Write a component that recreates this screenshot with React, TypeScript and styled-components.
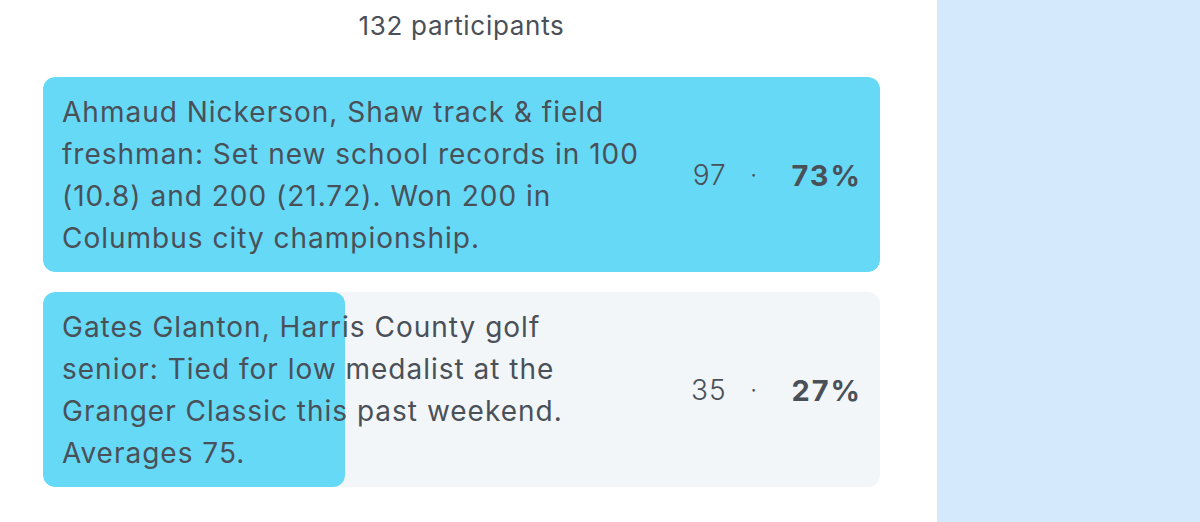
import React from "react";
import styled, { createGlobalStyle } from "styled-components";

const GlobalStyle = createGlobalStyle`
  html, body {
    margin: 0;
    padding: 0;
    background: #ffffff;
  }

  body {
    font-family: Inter, "Open Sans", sans-serif;
    color: #4a5058;
  }
`;

const Layout = styled.div`
  display: grid;
  grid-template-columns: 937px 1fr;
  height: 522px;
  overflow: hidden;
`;

const PollColumn = styled.main`
  padding: 0 57px 0 43px;
`;

const Sidebar = styled.aside`
  background: #d5e9fd;
`;

const Participants = styled.div`
  height: 50px;
  display: flex;
  align-items: center;
  justify-content: center;
  font-size: 26px;
  letter-spacing: 0.7px;
  color: #4a5058;
`;

const Options = styled.div`
  display: flex;
  flex-direction: column;
  gap: 20px;
  margin-top: 27px;
`;

const OptionRow = styled.div`
  position: relative;
  background: #f2f6f8;
  border-radius: 12px;
  overflow: hidden;
`;

const Fill = styled.div`
  position: absolute;
  top: 0;
  left: 0;
  bottom: 0;
  background: #66d9f6;
  border-radius: 12px;
`;

const OptionBody = styled.div`
  position: relative;
  display: flex;
  align-items: center;
  justify-content: space-between;
  padding: 14px 18px 13px 19px;
  min-height: 168px;
`;

const Label = styled.div`
  width: 580px;
  font-size: 28px;
  line-height: 42px;
  letter-spacing: 1px;
`;

const Stats = styled.div`
  display: flex;
  align-items: center;
  font-size: 28px;
  letter-spacing: 1px;
`;

const Votes = styled.span`
  font-weight: 300;
`;

const Dot = styled.span`
  margin: 0 34px 0 24px;
  font-size: 20px;
`;

const Percent = styled.span`
  font-size: 29px;
  font-weight: 700;
  letter-spacing: 2px;
`;

interface PollOption {
  id: number;
  label: string;
  votes: number;
}

const options: PollOption[] = [
  {
    id: 1,
    label:
      "Ahmaud Nickerson, Shaw track & field freshman: Set new school records in 100 (10.8) and 200 (21.72). Won 200 in Columbus city championship.",
    votes: 97,
  },
  {
    id: 2,
    label:
      "Gates Glanton, Harris County golf senior: Tied for low medalist at the Granger Classic this past weekend. Averages 75.",
    votes: 35,
  },
];

export default function App() {
  const total = options.reduce((sum, o) => sum + o.votes, 0);
  const top = Math.max(...options.map((o) => o.votes));

  return (
    <>
      <GlobalStyle />
      <Layout>
        <PollColumn>
          <Participants>{total} participants</Participants>
          <Options>
            {options.map((o) => (
              <OptionRow key={o.id}>
                <Fill style={{ width: `${(o.votes / top) * 100}%` }} />
                <OptionBody>
                  <Label>{o.label}</Label>
                  <Stats>
                    <Votes>{o.votes}</Votes>
                    <Dot>·</Dot>
                    <Percent>{Math.round((o.votes / total) * 100)}%</Percent>
                  </Stats>
                </OptionBody>
              </OptionRow>
            ))}
          </Options>
        </PollColumn>
        <Sidebar />
      </Layout>
    </>
  );
}
